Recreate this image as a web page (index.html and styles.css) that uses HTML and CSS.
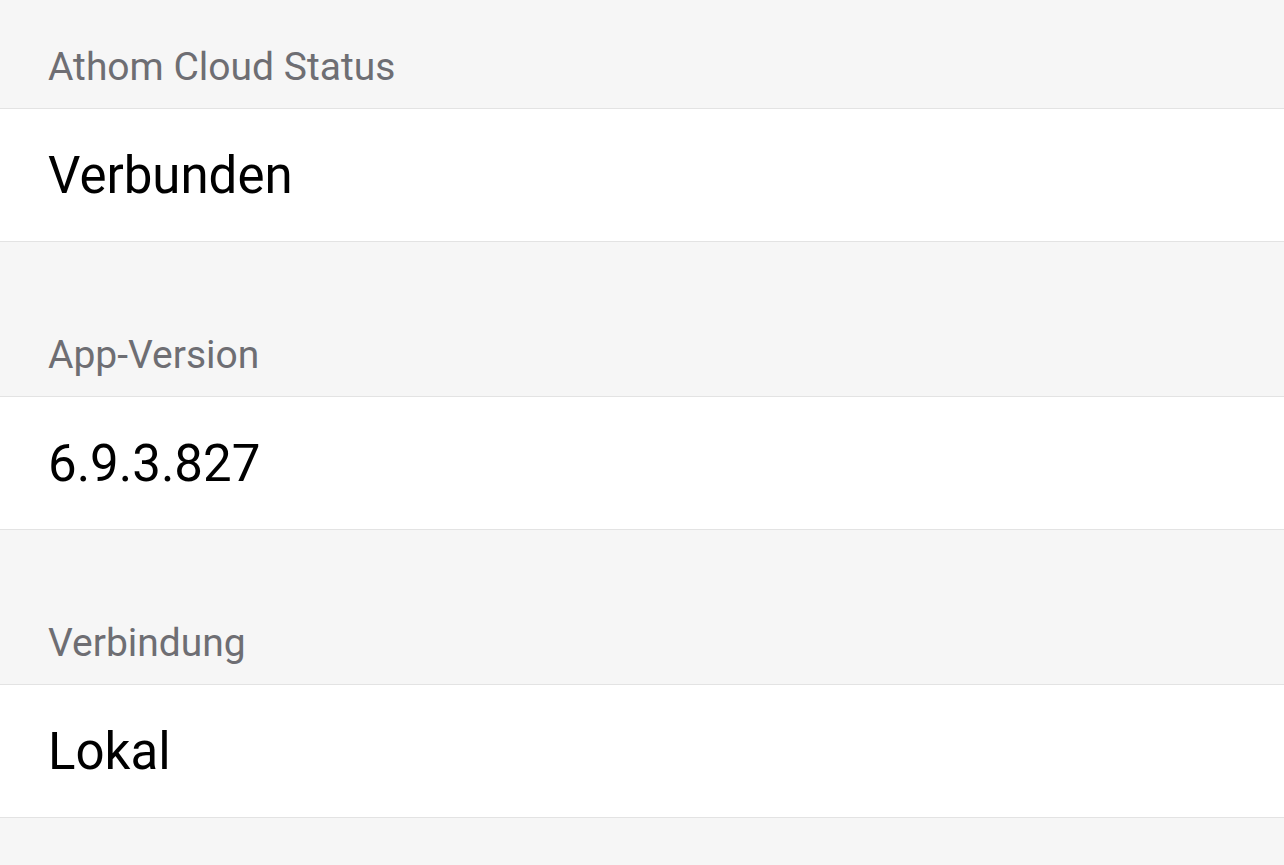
FILE: index.html
```html
<!DOCTYPE html>
<html lang="de">
<head>
<meta charset="utf-8">
<title>Einstellungen</title>
<link rel="stylesheet" href="styles.css">
</head>
<body>
<main class="list">
  <section class="group">
    <div class="group-title">Athom Cloud Status</div>
    <div class="item">Verbunden</div>
  </section>
  <section class="group">
    <div class="group-title">App-Version</div>
    <div class="item">6.9.3.827</div>
  </section>
  <section class="group">
    <div class="group-title">Verbindung</div>
    <div class="item">Lokal</div>
  </section>
</main>
</body>
</html>
```
FILE: styles.css
```css
html, body {
  margin: 0;
  padding: 0;
  background: #f6f6f6;
  font-family: Roboto, "Noto Sans", sans-serif;
}
.list {
  display: flex;
  flex-direction: column;
}
.group {
  display: flex;
  flex-direction: column;
}
.group + .group {
  margin-top: 46px;
}
.group-title {
  font-size: 39px;
  line-height: 39px;
  color: #6e6e73;
  padding: 48px 48px 21px;
  border-bottom: 1px solid #e3e3e3;
}
.item {
  background: #ffffff;
  font-size: 51px;
  line-height: 51px;
  color: #000000;
  padding: 41px 48px 40px;
  border-bottom: 1px solid #e3e3e3;
}
```
